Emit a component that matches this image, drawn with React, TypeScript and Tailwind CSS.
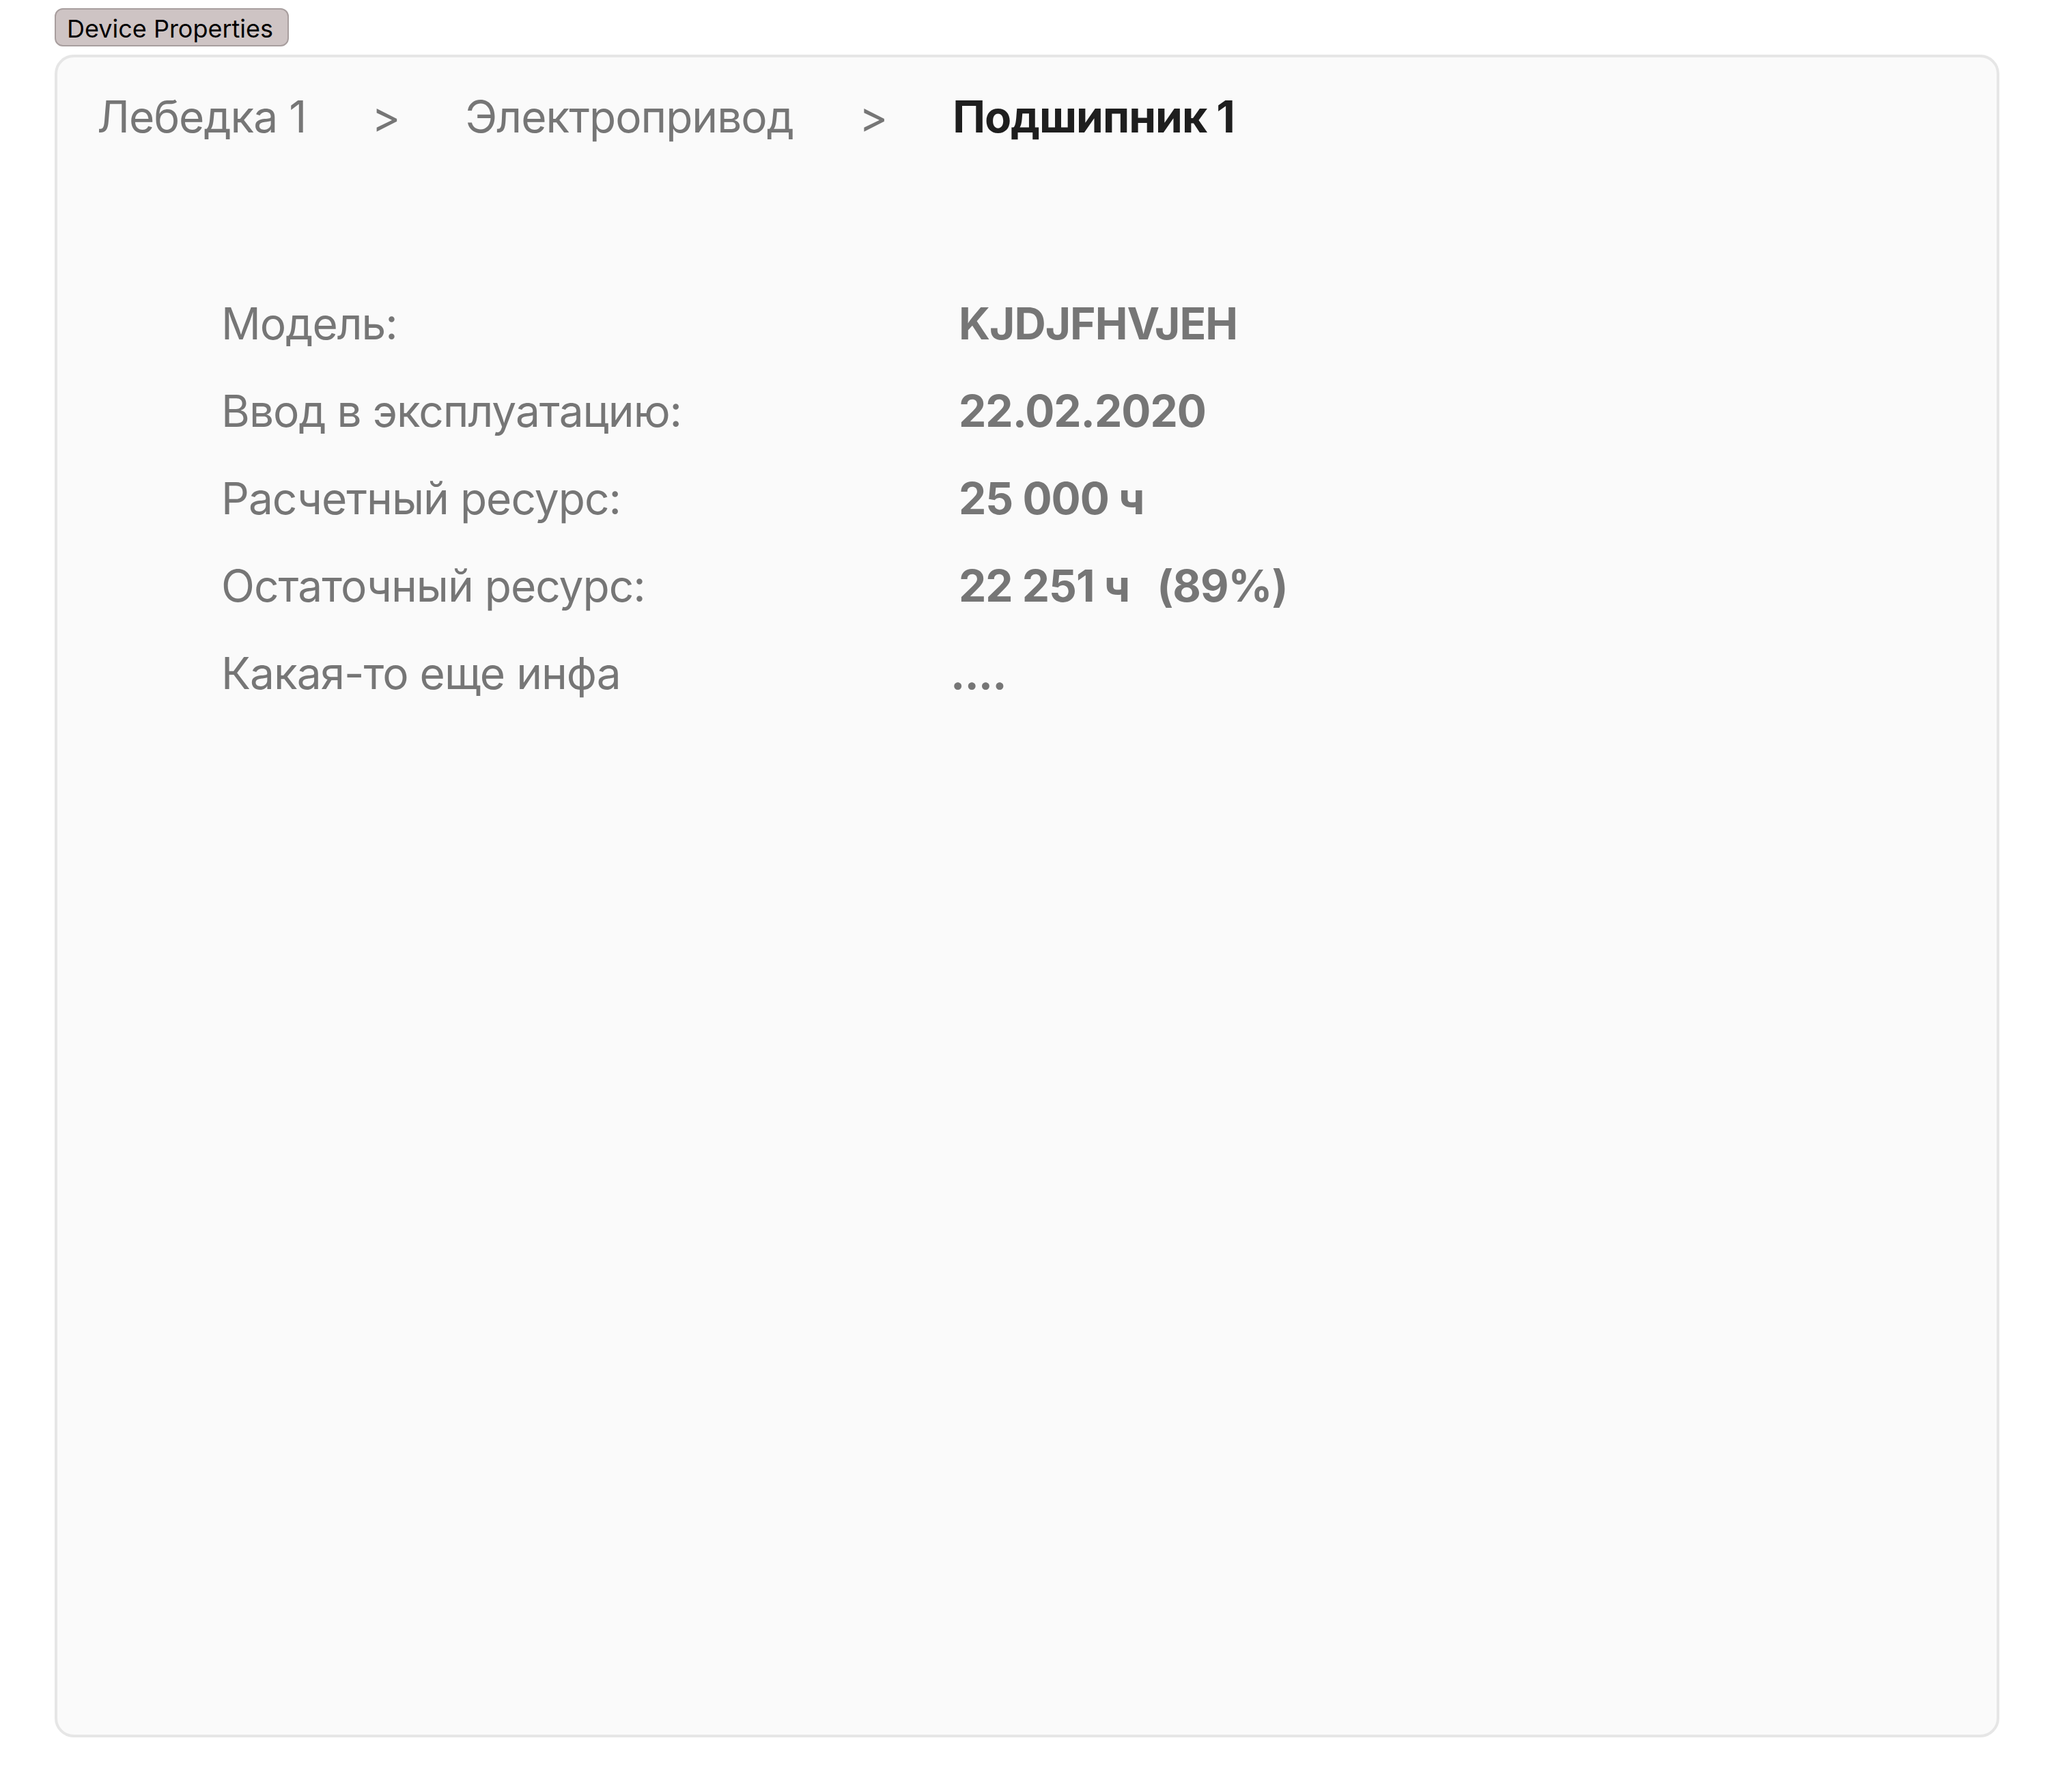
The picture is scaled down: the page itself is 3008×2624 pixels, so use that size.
const ROWS: { label: string; value: React.ReactNode }[] = [
  { label: 'Модель:', value: 'KJDJFHVJEH' },
  { label: 'Ввод в эксплуатацию:', value: '22.02.2020' },
  { label: 'Расчетный ресурс:', value: '25 000 ч' },
  {
    label: 'Остаточный ресурс:',
    value: (
      <>
        22 251 ч<span className="ml-[40px]">(89%)</span>
      </>
    ),
  },
]

const CRUMBS = ['Лебедка 1', 'Электропривод']

export default function App() {
  return (
    <div className="min-h-screen bg-white font-['Inter','Noto_Sans',sans-serif] px-[80px] pt-[12px]">
      <div className="inline-flex items-center h-[56px] w-[343px] px-4 pt-1 rounded-[12px] border-2 border-[#a89e9e] bg-[#cec4c4] text-[36px] text-black">
        Device Properties
      </div>

      <div className="mt-[12px] h-[2464px] rounded-[28px] border-4 border-[#e6e6e6] bg-[#fafafa] pl-[58px] pt-[48px]">
        <div className="flex items-center gap-[96px] text-[64px] leading-[78px] tracking-[-1px]">
          {CRUMBS.map((c) => (
            <div key={c} className="contents">
              <span className="text-[#767676]">{c}</span>
              <span className="text-[#767676]">&gt;</span>
            </div>
          ))}
          <span className="font-bold text-[#1e1e1e]">Подшипник 1</span>
        </div>

        <div className="mt-[225px] ml-[182px] flex flex-col gap-[50px] text-[64px] leading-[78px] tracking-[-1px] text-[#767676]">
          {ROWS.map((r) => (
            <div key={r.label} className="flex">
              <span className="w-[1080px] shrink-0">{r.label}</span>
              <span className="font-bold">{r.value}</span>
            </div>
          ))}
          <div className="flex">
            <span className="w-[1080px] shrink-0">Какая-то еще инфа</span>
            <span className="font-bold -ml-3">....</span>
          </div>
        </div>
      </div>
    </div>
  )
}
